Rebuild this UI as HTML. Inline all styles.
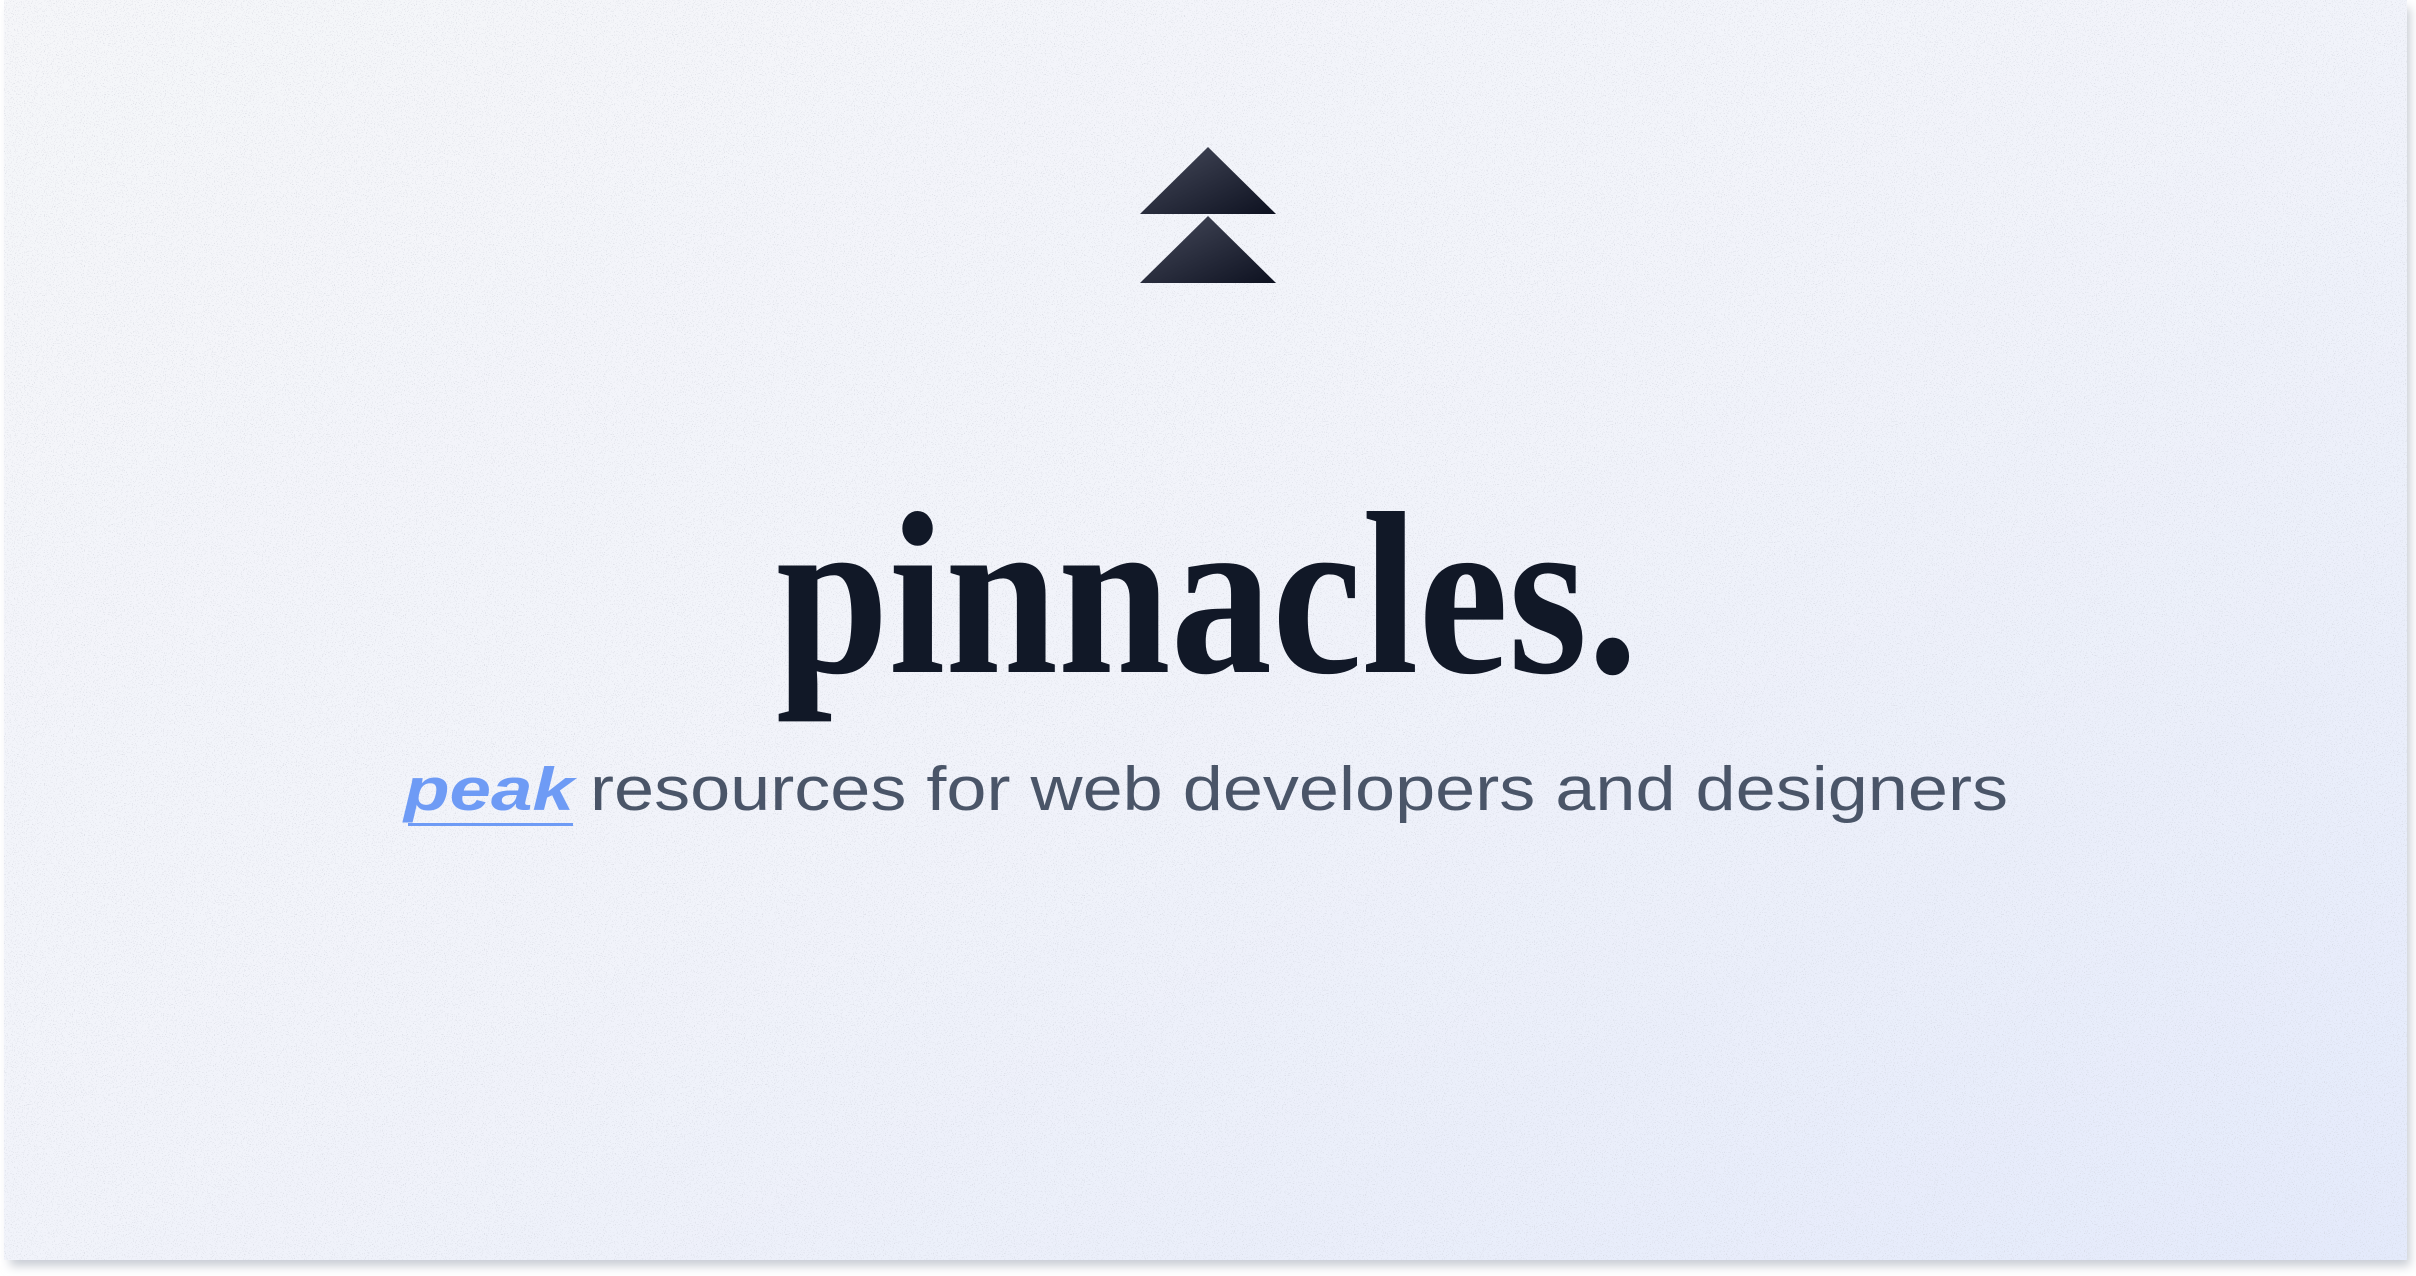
<!DOCTYPE html>
<html><head><meta charset="utf-8"><style>
html,body{margin:0;padding:0;width:2416px;height:1276px;overflow:hidden;background:#ffffff}
svg{display:block}
</style></head><body>
<svg width="2416" height="1276" viewBox="0 0 2416 1276" xmlns="http://www.w3.org/2000/svg">
<defs>
<linearGradient id="bg" x1="0" y1="0" x2="1" y2="1">
<stop offset="0" stop-color="#f5f6f9"/><stop offset="0.5" stop-color="#f1f3fa"/><stop offset="1" stop-color="#e4eafb"/>
</linearGradient>
<linearGradient id="tri" x1="0" y1="0" x2="1" y2="1">
<stop offset="0" stop-color="#474b5c"/><stop offset="1" stop-color="#0d1120"/>
</linearGradient>
<filter id="noise" x="0" y="0" width="100%" height="100%">
<feTurbulence type="fractalNoise" baseFrequency="0.9" numOctaves="1" seed="3"/>
<feColorMatrix type="matrix" values="0 0 0 0 0.6  0 0 0 0 0.62  0 0 0 0 0.68  25 0 0 0 -15.5"/>
<feComposite in2="SourceGraphic" operator="in"/>
</filter>
<filter id="sh" x="-5%" y="-5%" width="110%" height="110%"><feGaussianBlur stdDeviation="5"/></filter>
</defs>
<rect x="10" y="8" width="2400" height="1258" fill="#c8ccd4" filter="url(#sh)"/>
<rect x="4" y="0" width="2403" height="1260" fill="url(#bg)"/>
<rect x="4" y="0" width="2403" height="1260" fill="#000" filter="url(#noise)" opacity="0.45"/>
<polygon points="1208,147 1276,214 1140,214" fill="url(#tri)"/>
<polygon points="1208,216 1276,283 1140,283" fill="url(#tri)"/>
<text x="776" y="672" font-family="Liberation Serif, serif" font-weight="bold" font-size="232" fill="#111827" textLength="862" lengthAdjust="spacingAndGlyphs">pinnacles.</text>
<text x="404" y="810" font-family="Liberation Sans, sans-serif" font-weight="bold" font-style="italic" font-size="60" fill="#6e9bf5" textLength="170" lengthAdjust="spacingAndGlyphs">peak</text>
<rect x="408" y="823" width="165" height="3" fill="#6e9bf5"/>
<text x="590" y="810" font-family="Liberation Sans, sans-serif" font-size="62" fill="#4a5568" textLength="1418" lengthAdjust="spacingAndGlyphs">resources for web developers and designers</text>
</svg>
</body></html>
